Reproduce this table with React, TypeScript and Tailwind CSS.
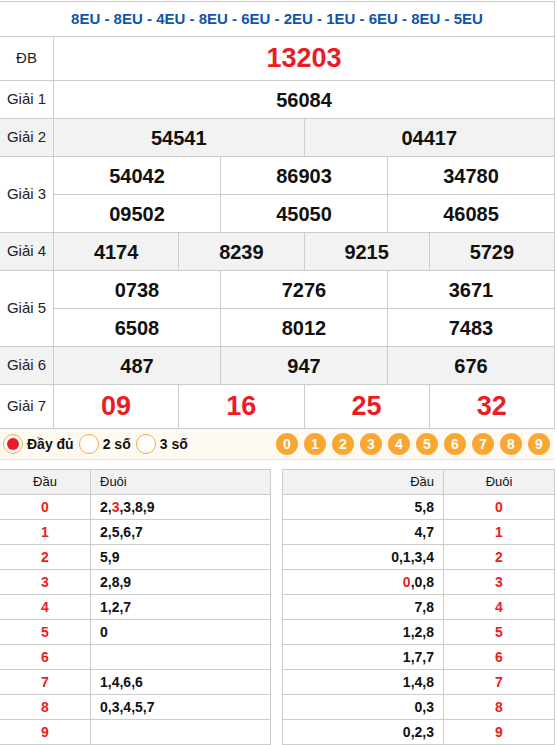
import { type ReactNode } from "react";

const RED = "text-[#ec1c24]";

function Row({ label, gray, tall, children }: { label: string; gray?: boolean; tall?: boolean; children: ReactNode }) {
  return (
    <div
      className={
        "flex border-b border-[#cccccc] " +
        (tall ? "h-[44px] " : "") +
        (gray ? "bg-[#f2f2f2]" : "bg-white")
      }
    >
      <div className="flex w-[54px] shrink-0 items-center justify-center border-r border-[#cccccc] text-[15px] text-[#222]">
        {label}
      </div>
      <div className="flex flex-1 flex-col">{children}</div>
    </div>
  );
}

function Cells({ items, red, big, last = true }: { items: string[]; red?: boolean; big?: boolean; last?: boolean }) {
  return (
    <div className={"flex " + (big ? "h-[43px]" : "h-[37px]") + (last ? "" : " h-[38px] border-b border-[#cccccc]")}>
      {items.map((n, i) => (
        <div
          key={i}
          className={
            "flex flex-1 items-center justify-center border-r border-[#cccccc] font-bold " +
            (big ? "text-[27px] " : "text-[20px] ") +
            (red ? RED : "text-[#111]")
          }
        >
          {n}
        </div>
      ))}
    </div>
  );
}

const left: [string, ReactNode][] = [
  ["0", <>2,<span className={RED}>3</span>,3,8,9</>],
  ["1", "2,5,6,7"],
  ["2", "5,9"],
  ["3", "2,8,9"],
  ["4", "1,2,7"],
  ["5", "0"],
  ["6", ""],
  ["7", "1,4,6,6"],
  ["8", "0,3,4,5,7"],
  ["9", ""],
];

const right: [ReactNode, string][] = [
  ["5,8", "0"],
  ["4,7", "1"],
  ["0,1,3,4", "2"],
  [<><span className={RED}>0</span>,0,8</>, "3"],
  ["7,8", "4"],
  ["1,2,8", "5"],
  ["1,7,7", "6"],
  ["1,4,8", "7"],
  ["0,3", "8"],
  ["0,2,3", "9"],
];

function Radio({ label, on }: { label: string; on?: boolean }) {
  return (
    <div className="flex items-center gap-[4px]">
      <span className="flex h-[20px] w-[20px] items-center justify-center rounded-full border border-[#f4a940] bg-white">
        {on ? <span className="h-[12px] w-[12px] rounded-full bg-[#ec1c24]" /> : null}
      </span>
      <span className="text-[14px] font-bold text-[#111]">{label}</span>
    </div>
  );
}

export default function App() {
  return (
    <div className="w-[557px] bg-white pt-px font-['Liberation_Sans',Arial,sans-serif]">
      <div className="w-[555px] border-t border-[#cccccc]">
        <div className="flex h-[35px] items-center justify-center border-b border-r border-[#cccccc] text-[15px] font-bold text-[#0f56a8]">
          8EU - 8EU - 4EU - 8EU - 6EU - 2EU - 1EU - 6EU - 8EU - 5EU
        </div>
        <Row label="ĐB" tall>
          <Cells items={["13203"]} red big />
        </Row>
        <Row label="Giải 1">
          <Cells items={["56084"]} />
        </Row>
        <Row label="Giải 2" gray>
          <Cells items={["54541", "04417"]} />
        </Row>
        <Row label="Giải 3">
          <Cells items={["54042", "86903", "34780"]} last={false} />
          <Cells items={["09502", "45050", "46085"]} />
        </Row>
        <Row label="Giải 4" gray>
          <Cells items={["4174", "8239", "9215", "5729"]} />
        </Row>
        <Row label="Giải 5">
          <Cells items={["0738", "7276", "3671"]} last={false} />
          <Cells items={["6508", "8012", "7483"]} />
        </Row>
        <Row label="Giải 6" gray>
          <Cells items={["487", "947", "676"]} />
        </Row>
        <Row label="Giải 7" tall>
          <Cells items={["09", "16", "25", "32"]} red big />
        </Row>
      </div>

      <div className="flex h-[31px] w-[555px] items-center border-b border-[#fde3c2] bg-[#fffaf1] pl-[3px] pr-[5px]">
        <div className="flex items-center gap-[5px]">
          <Radio label="Đầy đủ" on />
          <Radio label="2 số" />
          <Radio label="3 số" />
        </div>
        <div className="ml-auto flex gap-[6px]">
          {Array.from({ length: 10 }).map((_, i) => (
            <span
              key={i}
              className="flex h-[22px] w-[22px] items-center justify-center rounded-full bg-[#f9a732] text-[14px] font-bold text-white"
            >
              {i}
            </span>
          ))}
        </div>
      </div>

      <div className="mt-[9px] flex gap-[11px] text-[13px]">
        <div className="w-[271px] border-r border-t border-[#cccccc]">
          <div className="flex h-[25px] border-b border-[#cccccc] bg-[#f2f2f2] text-[#111]">
            <div className="flex w-[91px] items-center justify-center border-r border-[#cccccc]">Đầu</div>
            <div className="flex flex-1 items-center pl-[9px]">Đuôi</div>
          </div>
          {left.map(([d, t]) => (
            <div key={d} className="flex h-[25px] border-b border-[#cccccc] text-[14px] font-bold">
              <div className={"flex w-[91px] items-center justify-center border-r border-[#cccccc] " + RED}>{d}</div>
              <div className="flex flex-1 items-center pl-[9px] text-[#111]">{t}</div>
            </div>
          ))}
        </div>
        <div className="w-[273px] border-l border-r border-t border-[#cccccc]">
          <div className="flex h-[25px] border-b border-[#cccccc] bg-[#f2f2f2] text-[#111]">
            <div className="flex w-[161px] items-center justify-end border-r border-[#cccccc] pr-[9px]">Đầu</div>
            <div className="flex flex-1 items-center justify-center">Đuôi</div>
          </div>
          {right.map(([t, d]) => (
            <div key={d} className="flex h-[25px] border-b border-[#cccccc] text-[14px] font-bold">
              <div className="flex w-[161px] items-center justify-end border-r border-[#cccccc] pr-[9px] text-[#111]">{t}</div>
              <div className={"flex flex-1 items-center justify-center " + RED}>{d}</div>
            </div>
          ))}
        </div>
      </div>
    </div>
  );
}
